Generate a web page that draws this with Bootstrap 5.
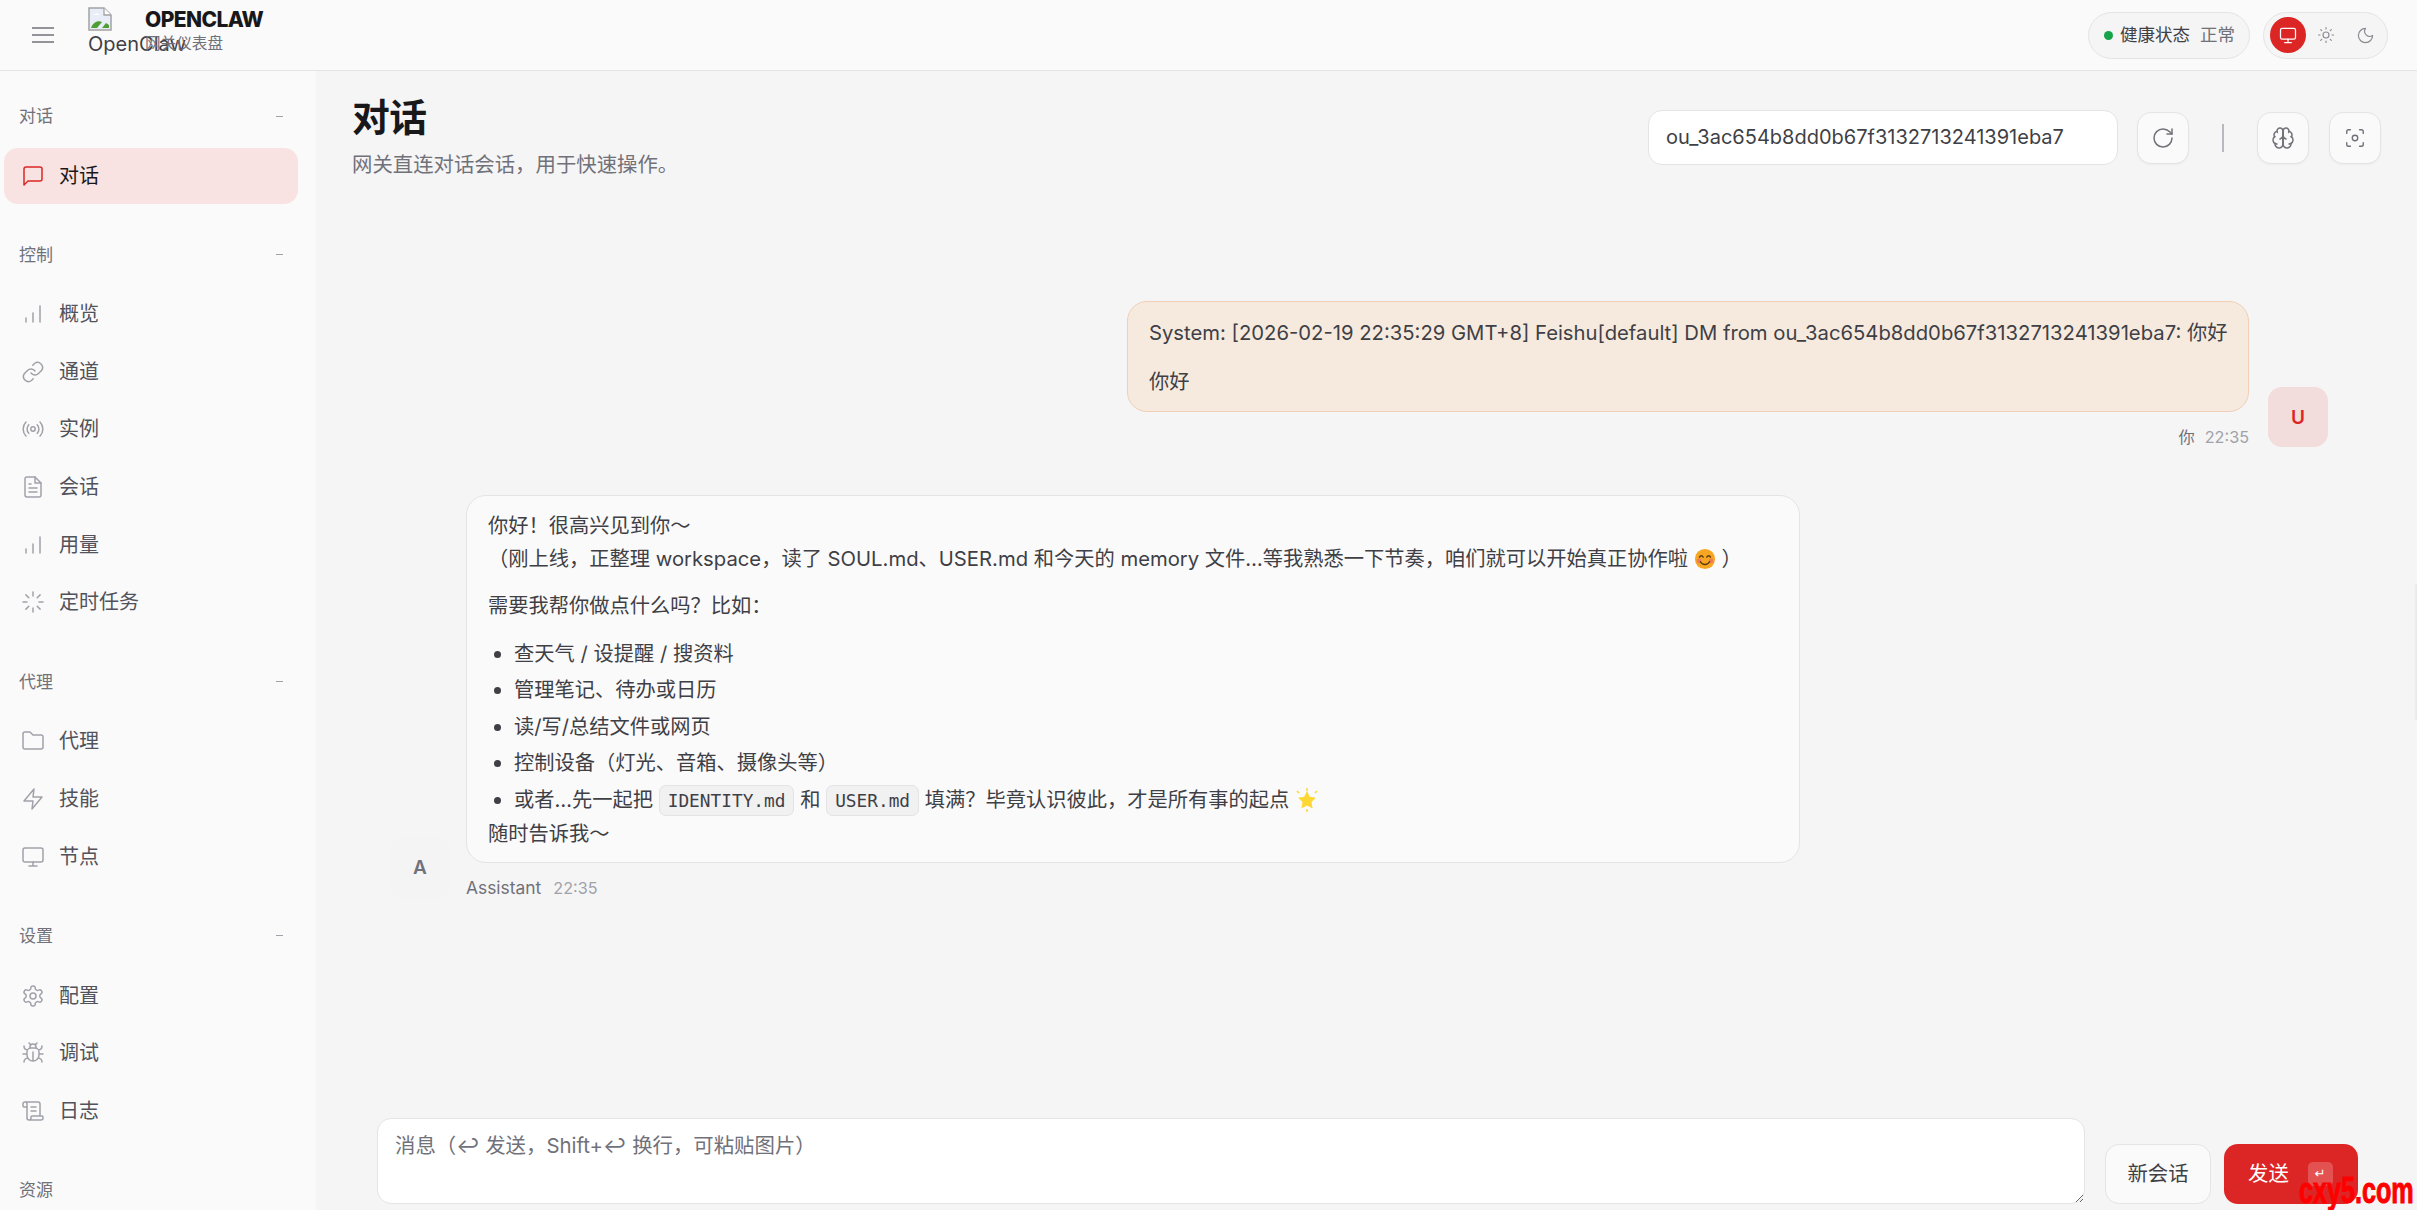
<!DOCTYPE html>
<html lang="zh-CN">
<head>
<meta charset="utf-8">
<title>OpenClaw</title>
<link rel="stylesheet" href="https://cdn.jsdelivr.net/npm/bootstrap@5.3.0/dist/css/bootstrap.min.css">
<style>
:root{--ui:"Inter","Noto Sans CJK SC",sans-serif;--mono:"DejaVu Sans Mono","Liberation Mono",monospace}
html,body{height:100%}
body{font-family:var(--ui);background:#f5f5f5;color:#3f3f46;overflow:hidden;position:relative}
svg.ico{fill:none;stroke:currentColor;stroke-width:1.5;stroke-linecap:round;stroke-linejoin:round;display:block;flex:none}
.oc-top{height:71px;background:#fafafa;border-bottom:1px solid #e4e4e7;padding:0 29px 0 32px}
.oc-burger{width:22px;color:#71717a}
.oc-logoalt{width:57px;height:70px;margin-left:34px;font-size:20px;line-height:26px;color:#3f3f46;white-space:nowrap;padding-top:7px}
.oc-brand{padding-top:8px;height:70px;width:140px}
.oc-brand-t{font-size:21px;line-height:24px;font-weight:800;color:#18181b;letter-spacing:-.6px}
.oc-brand-s{font-size:15.6px;line-height:20px;color:#71717a;margin-top:2px}
.oc-pill{height:47px;border:1px solid #e4e4e7;background:#f5f5f5;border-radius:24px}
.oc-health{width:162px;padding-left:15px;font-size:17.5px;color:#3f3f46;gap:7px}
.oc-dot{width:9px;height:9px;border-radius:50%;background:#16a34a}
.oc-health-v{color:#71717a;margin-left:3px}
.oc-theme{width:125px;margin-left:13px;padding:0 6px;color:#8a8a92}
.oc-theme-on{width:36px;height:36px;border-radius:50%;background:#dc2626;color:#fff}
.oc-theme-b{width:20px;margin-left:11px}
.oc-theme-b+.oc-theme-b{margin-left:19px}
.oc-body{height:calc(100% - 71px)}
.oc-side{width:316px;flex:none;background:#fafafa;padding-top:32px;overflow:hidden}
.oc-grp{height:26px;padding:0 33px 0 19px;font-size:17px;line-height:26px;color:#71717a}
.oc-grp i{display:block;width:7px;height:1px;background:#a1a1aa}
.oc-sect{margin-bottom:37.5px}
.oc-list{margin-top:18px}
.oc-list-one{margin-top:19px}
.oc-item{height:57.6px;padding-left:17px;margin-left:4px;width:294px;font-size:20px;color:#52525b;gap:14px;border-radius:14px;text-decoration:none}
.oc-item svg{color:#a1a1aa;width:24px;height:24px}
.oc-item.oc-on{height:56px;background:#f8e3e2;color:#18181b}
.oc-item.oc-on svg{color:#dc2626}
.oc-main{padding:0 36px 6px 36px;min-width:0}
.oc-head{height:119px;padding-top:21px;flex:none}
.oc-title{font-size:37.8px;line-height:50px;font-weight:700;color:#18181b;margin:0 0 10px;letter-spacing:-.5px}
.oc-sub{font-size:20.4px;line-height:26px;color:#71717a;margin:0}
.oc-ctrl{margin-top:18px}
.oc-sess{width:470px;height:55px;border:1px solid #e4e4e7;background:#fff;border-radius:14px;font-size:20px;color:#3f3f46;padding:0 17px;margin-right:19px;line-height:53px}
.oc-sq{width:52px;height:52px;border:1px solid #e4e4e7;background:#fafafa;border-radius:14px;color:#71717a;box-shadow:0 1px 2px rgba(0,0,0,.04)}
.oc-vr{width:2px;height:28px;background:#b8b8bf;margin:0 33px}
.oc-sq+.oc-sq{margin-left:20px}
.oc-chat{flex:1;min-height:0;padding-top:111px;font-size:20.25px;line-height:33px;color:#3f3f46}
.oc-urow{margin-right:53px;gap:19px}
.oc-ubub{width:1122px;background:#f6eade;border:1px solid #f0cfb6;border-radius:20px;padding:14px 21px 13px}
.oc-ubub p{margin:0 0 16px;white-space:nowrap}
.oc-ubub p:last-child{margin-bottom:0}
.oc-av{width:60px;height:60px;border-radius:14px;font-size:19px;font-weight:600;flex:none}
.oc-av-u{background:#f3dcdc;color:#dc2626}
.oc-av-a{background:#f4f4f5;color:#71717a}
.oc-meta{font-size:16.2px;line-height:20px;margin-top:15px;color:#71717a}
.oc-meta span{color:#a1a1aa;margin-left:10px}
.oc-meta-a{font-size:17.4px}
.oc-meta-a span{font-size:16.2px;margin-left:12px}
.oc-arow{margin-top:48px;margin-left:38px;gap:16px}
.oc-abub{width:1334px;background:#fafafa;border:1px solid #e4e4e7;border-radius:20px;padding:13px 21px 12px}
.oc-abub p{margin:0 0 14px}
.oc-abub ul{margin:14.5px 0 0;padding-left:26px}
.oc-abub li{margin-bottom:3.5px}
.oc-abub li:last-child{margin-bottom:0}
.oc-code{font-family:var(--mono);font-size:17.8px;padding:4px 8px;background:#f1f1f2;border:1px solid #e4e4e7;border-radius:7px;color:#3f3f46}
.oc-emo{display:inline-block;width:22px;height:22px;vertical-align:-4px}
.oc-emo-s{width:24px;height:24px;vertical-align:-5px}
.oc-compose{flex:none;gap:20px;margin-left:25px}
.oc-input{width:1708px;height:86px;border:1px solid #e4e4e7;border-radius:14px;background:#fff;padding:13px 17px;font-size:20.4px;line-height:28px;color:#3f3f46;font-family:"Inter","Noto Sans CJK SC","DejaVu Sans",sans-serif;resize:vertical;display:block;outline:0}
.oc-input::placeholder{color:#71717a;opacity:1}
.oc-new{width:106px;height:60px;border:1px solid #e4e4e7;background:#fafafa;border-radius:14px;font-size:20.4px;color:#3f3f46;padding:0}
.oc-send{width:134px;height:60px;background:#dc2626;border:0;border-radius:14px;font-size:20.4px;color:#fff;padding:0 0 0 24px;margin-left:-7px;gap:19px}
.oc-send:hover{background:#dc2626;color:#fff}
.oc-kbd{width:25px;height:24px;border-radius:5px;background:rgba(255,255,255,.2);font-size:13px;font-family:"DejaVu Sans",sans-serif}
.oc-mark{position:absolute;right:3px;bottom:3px;font-family:"Liberation Sans",sans-serif;font-weight:700;font-size:37px;line-height:32px;color:#f00;-webkit-text-stroke:1px #f00;transform:scaleX(.68);transform-origin:right center}
.oc-edge{position:absolute;right:0;top:584px;width:3px;height:136px;background:linear-gradient(90deg,#f5f5f5,#e6e6e8)}
</style>
</head>
<body>
<header class="oc-top d-flex align-items-center">
  <svg class="oc-burger" viewBox="0 0 22 18" height="18" fill="none" stroke="currentColor" stroke-width="1.6"><path d="M0 2h22M0 9h22M0 16h22"/></svg>
  <div class="oc-logoalt">
    <svg width="24" height="24" viewBox="0 0 24 24" class="d-block"><path d="M1 1h15l7 7v15H1z" fill="#e8edf8" stroke="#a3a3a3" stroke-width="1.5"/><path d="M16 1v7h7" fill="#fff" stroke="#a3a3a3" stroke-width="1.3"/><path d="M3 21c2-6 7-8 11-6l-5 6z" fill="#4f9e33"/><path d="M14 21l4-5 3 2v3z" fill="#4f9e33"/><path d="M5 8c2-2 5-2 7 0z" fill="#fff"/></svg>
    OpenClaw
  </div>
  <div class="oc-brand">
    <div class="oc-brand-t">OPENCLAW</div>
    <div class="oc-brand-s">网关仪表盘</div>
  </div>
  <div class="oc-pill oc-health d-flex align-items-center ms-auto"><span class="oc-dot"></span><span>健康状态</span><span class="oc-health-v">正常</span></div>
  <div class="oc-pill oc-theme d-flex align-items-center">
    <span class="oc-theme-on d-flex align-items-center justify-content-center"><svg class="ico" width="20" height="20" viewBox="0 0 24 24"><rect x="3" y="4" width="18" height="13" rx="2"/><path d="M8 21h8M12 17v4"/></svg></span>
    <span class="oc-theme-b"><svg class="ico" width="18" height="18" viewBox="0 0 24 24"><circle cx="12" cy="12" r="4"/><path d="M12 2v2M12 20v2M4.900 4.900l1.400 1.400M17.700 17.700l1.400 1.400M2 12h2M20 12h2M4.900 19.100l1.400-1.400M17.700 6.300l1.400-1.400"/></svg></span>
    <span class="oc-theme-b"><svg class="ico" width="19" height="19" viewBox="0 0 24 24"><path d="M12 3a6.500 6.500 0 0 0 9 9 9 9 0 1 1-9-9z"/></svg></span>
  </div>
</header>
<div class="oc-body d-flex">
  <nav class="oc-side">
    <div class="oc-sect">
      <div class="oc-grp d-flex justify-content-between align-items-center"><span>对话</span><i></i></div>
      <div class="oc-list-one">
        <a class="oc-item oc-on d-flex align-items-center"><svg class="ico" viewBox="0 0 24 24"><path d="M21 15a2 2 0 0 1-2 2H7l-4 4V5a2 2 0 0 1 2-2h14a2 2 0 0 1 2 2z"/></svg><span>对话</span></a>
      </div>
    </div>
    <div class="oc-sect">
      <div class="oc-grp d-flex justify-content-between align-items-center"><span>控制</span><i></i></div>
      <div class="oc-list">
        <a class="oc-item d-flex align-items-center"><svg class="ico" viewBox="0 0 24 24"><path d="M5 20v-4M12 20v-9M19 20V4"/></svg><span>概览</span></a>
        <a class="oc-item d-flex align-items-center"><svg class="ico" viewBox="0 0 24 24"><path d="M10 13a5 5 0 0 0 7.500.500l3-3a5 5 0 0 0-7-7l-1.700 1.700"/><path d="M14 11a5 5 0 0 0-7.500-.500l-3 3a5 5 0 0 0 7 7l1.700-1.700"/></svg><span>通道</span></a>
        <a class="oc-item d-flex align-items-center"><svg class="ico" viewBox="0 0 24 24"><circle cx="12" cy="12" r="2.200"/><path d="M16.200 7.800a6 6 0 0 1 0 8.400M7.800 16.200a6 6 0 0 1 0-8.400M19 5a10 10 0 0 1 0 14M5 19A10 10 0 0 1 5 5"/></svg><span>实例</span></a>
        <a class="oc-item d-flex align-items-center"><svg class="ico" viewBox="0 0 24 24"><path d="M14 2H6a2 2 0 0 0-2 2v16a2 2 0 0 0 2 2h12a2 2 0 0 0 2-2V8z"/><path d="M14 2v6h6M8 13h8M8 17h8M8 9h2"/></svg><span>会话</span></a>
        <a class="oc-item d-flex align-items-center"><svg class="ico" viewBox="0 0 24 24"><path d="M5 20v-4M12 20v-9M19 20V4"/></svg><span>用量</span></a>
        <a class="oc-item d-flex align-items-center"><svg class="ico" viewBox="0 0 24 24"><path d="M12 2v4M12 18v4M4.900 4.900l2.900 2.900M16.200 16.200l2.900 2.900M2 12h4M18 12h4M4.900 19.100l2.900-2.900M16.200 7.800l2.900-2.900"/></svg><span>定时任务</span></a>
      </div>
    </div>
    <div class="oc-sect">
      <div class="oc-grp d-flex justify-content-between align-items-center"><span>代理</span><i></i></div>
      <div class="oc-list">
        <a class="oc-item d-flex align-items-center"><svg class="ico" viewBox="0 0 24 24"><path d="M20 20a2 2 0 0 0 2-2V8a2 2 0 0 0-2-2h-8l-3-3H4a2 2 0 0 0-2 2v13a2 2 0 0 0 2 2z"/></svg><span>代理</span></a>
        <a class="oc-item d-flex align-items-center"><svg class="ico" viewBox="0 0 24 24"><path d="M13 2 3 14h9l-1 8 10-12h-9z"/></svg><span>技能</span></a>
        <a class="oc-item d-flex align-items-center"><svg class="ico" viewBox="0 0 24 24"><rect x="2" y="3" width="20" height="14" rx="2"/><path d="M8 21h8M12 17v4"/></svg><span>节点</span></a>
      </div>
    </div>
    <div class="oc-sect">
      <div class="oc-grp d-flex justify-content-between align-items-center"><span>设置</span><i></i></div>
      <div class="oc-list">
        <a class="oc-item d-flex align-items-center"><svg class="ico" viewBox="0 0 24 24"><path d="M12.200 2h-.4a2 2 0 0 0-2 2v.2a2 2 0 0 1-1 1.700l-.4.3a2 2 0 0 1-2 0l-.2-.1a2 2 0 0 0-2.700.7l-.2.4a2 2 0 0 0 .7 2.700l.2.1a2 2 0 0 1 1 1.700v.5a2 2 0 0 1-1 1.700l-.2.2a2 2 0 0 0-.7 2.700l.2.4a2 2 0 0 0 2.700.7l.2-.1a2 2 0 0 1 2 0l.4.3a2 2 0 0 1 1 1.700v.2a2 2 0 0 0 2 2h.4a2 2 0 0 0 2-2v-.2a2 2 0 0 1 1-1.700l.4-.3a2 2 0 0 1 2 0l.2.1a2 2 0 0 0 2.700-.7l.2-.4a2 2 0 0 0-.7-2.700l-.2-.1a2 2 0 0 1-1-1.700v-.5a2 2 0 0 1 1-1.700l.2-.2a2 2 0 0 0 .7-2.700l-.2-.4a2 2 0 0 0-2.700-.7l-.2.1a2 2 0 0 1-2 0l-.4-.3a2 2 0 0 1-1-1.700V4a2 2 0 0 0-2-2z"/><circle cx="12" cy="12" r="3"/></svg><span>配置</span></a>
        <a class="oc-item d-flex align-items-center"><svg class="ico" viewBox="0 0 24 24"><path d="m8 2 1.900 1.900M16 2l-1.900 1.900M9 7.100V6a3 3 0 0 1 6 0v1.100"/><path d="M12 20c-3.300 0-6-2.700-6-6v-3a4 4 0 0 1 4-4h4a4 4 0 0 1 4 4v3c0 3.300-2.700 6-6 6zM12 20v-9M6.500 9C4.600 8.800 3 7.100 3 5M6 13H2M3 21c0-2.100 1.700-3.900 3.800-4M21 5c0 2.100-1.600 3.800-3.500 4M22 13h-4M17.200 17c2.100.1 3.800 1.900 3.800 4"/></svg><span>调试</span></a>
        <a class="oc-item d-flex align-items-center"><svg class="ico" viewBox="0 0 24 24"><path d="M19 17V5a2 2 0 0 0-2-2H4M8 21h12a2 2 0 0 0 2-2v-1a1 1 0 0 0-1-1H11a1 1 0 0 0-1 1v1a2 2 0 1 1-4 0V5a2 2 0 1 0-4 0v2a1 1 0 0 0 1 1h3M15 8h-5M15 12h-5"/></svg><span>日志</span></a>
      </div>
    </div>
    <div class="oc-grp d-flex justify-content-between align-items-center"><span>资源</span></div>
  </nav>
  <main class="oc-main flex-grow-1 d-flex flex-column">
    <div class="oc-head d-flex justify-content-between align-items-start">
      <div>
        <h1 class="oc-title">对话</h1>
        <p class="oc-sub">网关直连对话会话，用于快速操作。</p>
      </div>
      <div class="oc-ctrl d-flex align-items-center">
        <div class="oc-sess">ou_3ac654b8dd0b67f3132713241391eba7</div>
        <button class="oc-sq btn d-flex align-items-center justify-content-center p-0"><svg class="ico" width="24" height="24" viewBox="0 0 24 24"><path d="M21 12a9 9 0 1 1-9-9c2.520 0 4.930 1 6.740 2.740L21 8"/><path d="M21 3v5h-5"/></svg></button>
        <span class="oc-vr"></span>
        <button class="oc-sq btn d-flex align-items-center justify-content-center p-0"><svg class="ico" width="24" height="24" viewBox="0 0 24 24"><path d="M12 5a3 3 0 1 0-5.997.125 4 4 0 0 0-2.526 5.770 4 4 0 0 0 .556 6.588A4 4 0 1 0 12 18Z"/><path d="M12 5a3 3 0 1 1 5.997.125 4 4 0 0 1 2.526 5.770 4 4 0 0 1-.556 6.588A4 4 0 1 1 12 18Z"/><path d="M15 13a4.500 4.500 0 0 1-3-4 4.500 4.500 0 0 1-3 4M12 5v13M17.599 6.500a3 3 0 0 0 .399-1.375M6.003 5.125A3 3 0 0 0 6.401 6.500M3.477 10.896a4 4 0 0 1 .585-.396M19.938 10.500a4 4 0 0 1 .585.396M6 18a4 4 0 0 1-1.967-.516M19.967 17.484A4 4 0 0 1 18 18"/></svg></button>
        <button class="oc-sq btn d-flex align-items-center justify-content-center p-0"><svg class="ico" width="22" height="22" viewBox="0 0 24 24"><path d="M3 7V5a2 2 0 0 1 2-2h2M17 3h2a2 2 0 0 1 2 2v2M21 17v2a2 2 0 0 1-2 2h-2M7 21H5a2 2 0 0 1-2-2v-2"/><circle cx="12" cy="12" r="3"/></svg></button>
      </div>
    </div>
    <div class="oc-chat">
      <div class="oc-urow d-flex justify-content-end align-items-end">
        <div>
          <div class="oc-ubub"><p>System: [2026-02-19 22:35:29 GMT+8] Feishu[default] DM from ou_3ac654b8dd0b67f3132713241391eba7: 你好</p><p>你好</p></div>
          <div class="oc-meta text-end">你<span>22:35</span></div>
        </div>
        <div class="oc-av oc-av-u d-flex align-items-center justify-content-center">U</div>
      </div>
      <div class="oc-arow d-flex align-items-end">
        <div class="oc-av oc-av-a d-flex align-items-center justify-content-center">A</div>
        <div>
          <div class="oc-abub">
            <p>你好！很高兴见到你～<br>（刚上线，正整理 workspace，读了 SOUL.md、USER.md 和今天的 memory 文件…等我熟悉一下节奏，咱们就可以开始真正协作啦 <svg class="oc-emo" viewBox="0 0 24 24"><circle cx="12" cy="12" r="11" fill="#f6a623"/><circle cx="5.500" cy="14" r="2.500" fill="#f0785a"/><circle cx="18.500" cy="14" r="2.500" fill="#f0785a"/><path d="M6 10c1-2 3-2 4 0M14 10c1-2 3-2 4 0M7 15c2 4 8 4 10 0" fill="none" stroke="#5b3a10" stroke-width="1.500" stroke-linecap="round"/></svg> ）</p>
            <p class="mb-0">需要我帮你做点什么吗？比如：</p>
            <ul>
              <li>查天气 / 设提醒 / 搜资料</li>
              <li>管理笔记、待办或日历</li>
              <li>读/写/总结文件或网页</li>
              <li>控制设备（灯光、音箱、摄像头等）</li>
              <li>或者…先一起把 <code class="oc-code">IDENTITY.md</code> 和 <code class="oc-code">USER.md</code> 填满？毕竟认识彼此，才是所有事的起点 <svg class="oc-emo oc-emo-s" viewBox="0 0 24 24"><path d="M12 3l2.800 5.800 6.200.9-4.500 4.400 1.100 6.300L12 17.400l-5.600 3 1.100-6.300L3 9.700l6.200-.9z" fill="#fdd835"/><path d="M12 0v3M12 21v3M2 3l2 2M22 3l-2 2" stroke="#fdd835" stroke-width="1.500"/></svg></li>
            </ul>
            <div>随时告诉我～</div>
          </div>
          <div class="oc-meta oc-meta-a">Assistant<span>22:35</span></div>
        </div>
      </div>
    </div>
    <div class="oc-compose d-flex align-items-end">
      <textarea class="oc-input" rows="2" placeholder="消息（↩ 发送，Shift+↩ 换行，可粘贴图片）"></textarea>
      <button class="oc-new btn">新会话</button>
      <button class="oc-send btn d-flex align-items-center"><span>发送</span><span class="oc-kbd d-flex align-items-center justify-content-center">↵</span></button>
    </div>
  </main>
</div>
<div class="oc-edge"></div>
<div class="oc-mark">cxy5.com</div>
<script src="https://cdn.jsdelivr.net/npm/bootstrap@5.3.0/dist/js/bootstrap.bundle.min.js"></script>
</body>
</html>
